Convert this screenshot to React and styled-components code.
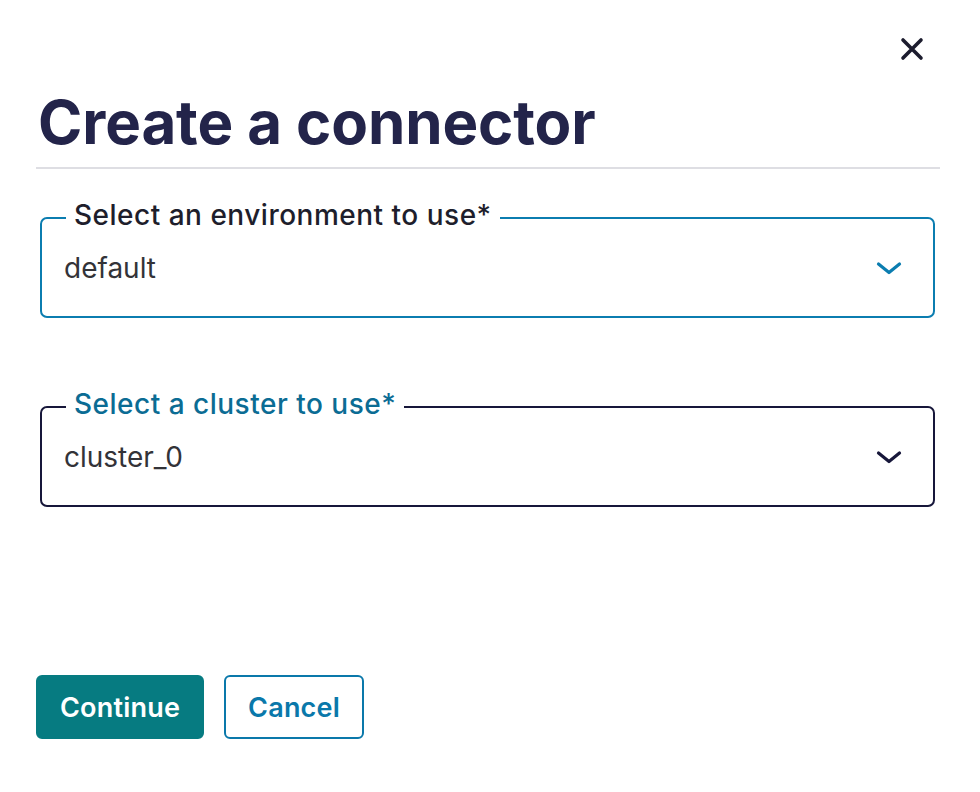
import React from "react";
import styled, { createGlobalStyle } from "styled-components";

const Global = createGlobalStyle`
  html, body { margin: 0; padding: 0; background: #fff; }
  body { font-family: Inter, "Noto Sans", sans-serif; }
  * { box-sizing: border-box; }
`;

const Dialog = styled.div`
  width: 980px;
  height: 792px;
  padding: 30px 40px 0 36px;
  display: flex;
  flex-direction: column;
`;

const TopBar = styled.div`
  display: flex;
  justify-content: flex-end;
  height: 40px;
`;

const CloseButton = styled.button`
  width: 32px;
  height: 32px;
  border: 0;
  background: none;
  padding: 0;
  margin-right: 12px;
  margin-top: 3px;
  display: flex;
  align-items: center;
  justify-content: center;
  cursor: pointer;
`;

const Title = styled.h1`
  margin: 16px 0 0 2px;
  font-size: 60px;
  line-height: 72px;
  font-weight: 700;
  color: #23244a;
  letter-spacing: -0.1px;
`;

const Divider = styled.hr`
  margin: 9px 0 0 0;
  border: 0;
  height: 2px;
  background: #dedee3;
`;

const Fields = styled.div`
  display: flex;
  flex-direction: column;
  gap: 73px;
  margin-top: 33px;
  padding: 0 5px 0 4px;
`;

const Field = styled.fieldset`
  margin: 0;
  padding: 0 30px 14px 22px;
  border: 2px solid ${(p) => p.$border};
  border-radius: 7px;
  min-width: 0;
`;

const Legend = styled.legend`
  margin-left: 2px;
  padding: 0 8px 6px;
  font-size: 28px;
  line-height: 26px;
  font-weight: 500;
  color: ${(p) => p.$color};
  letter-spacing: 0.5px;
`;

const SelectRow = styled.div`
  height: 68px;
  display: flex;
  align-items: center;
  justify-content: space-between;
`;

const Value = styled.span`
  font-size: 28px;
  color: #333338;
`;

const ButtonRow = styled.div`
  display: flex;
  gap: 20px;
  margin-top: auto;
  margin-bottom: 53px;
`;

const Button = styled.button`
  height: 64px;
  padding: 0 22px;
  border-radius: 6px;
  font-family: Inter, "Noto Sans", sans-serif;
  font-size: 27px;
  font-weight: 600;
  letter-spacing: 0.2px;
  cursor: pointer;
  background: ${(p) => (p.$primary ? "#067b81" : "#fff")};
  color: ${(p) => (p.$primary ? "#fff" : "#0a78aa")};
  border: 2px solid ${(p) => (p.$primary ? "#067b81" : "#0a78aa")};
`;

const Chevron = ({ color }) => (
  <svg width="28" height="16" viewBox="0 0 28 16" fill="none">
    <polyline
      points="3.5,4 14,12.5 24.5,4"
      stroke={color}
      strokeWidth="3.2"
      strokeLinecap="round"
      strokeLinejoin="round"
    />
  </svg>
);

const CloseIcon = () => (
  <svg width="24" height="24" viewBox="0 0 24 24" fill="none">
    <path
      d="M3 3 L21 21 M21 3 L3 21"
      stroke="#1c1c2e"
      strokeWidth="3.6"
      strokeLinecap="round"
    />
  </svg>
);

const fields = [
  {
    label: "Select an environment to use*",
    value: "default",
    border: "#0b7db0",
    labelColor: "#1e1e2c",
    chevron: "#0b7db0",
  },
  {
    label: "Select a cluster to use*",
    value: "cluster_0",
    border: "#17173a",
    labelColor: "#0b6c94",
    chevron: "#17173a",
  },
];

export default function App() {
  return (
    <>
      <Global />
      <Dialog>
        <TopBar>
          <CloseButton aria-label="Close">
            <CloseIcon />
          </CloseButton>
        </TopBar>
        <Title>Create a connector</Title>
        <Divider />
        <Fields>
          {fields.map((f) => (
            <Field key={f.label} $border={f.border}>
              <Legend $color={f.labelColor}>{f.label}</Legend>
              <SelectRow>
                <Value>{f.value}</Value>
                <Chevron color={f.chevron} />
              </SelectRow>
            </Field>
          ))}
        </Fields>
        <ButtonRow>
          <Button $primary>Continue</Button>
          <Button>Cancel</Button>
        </ButtonRow>
      </Dialog>
    </>
  );
}
